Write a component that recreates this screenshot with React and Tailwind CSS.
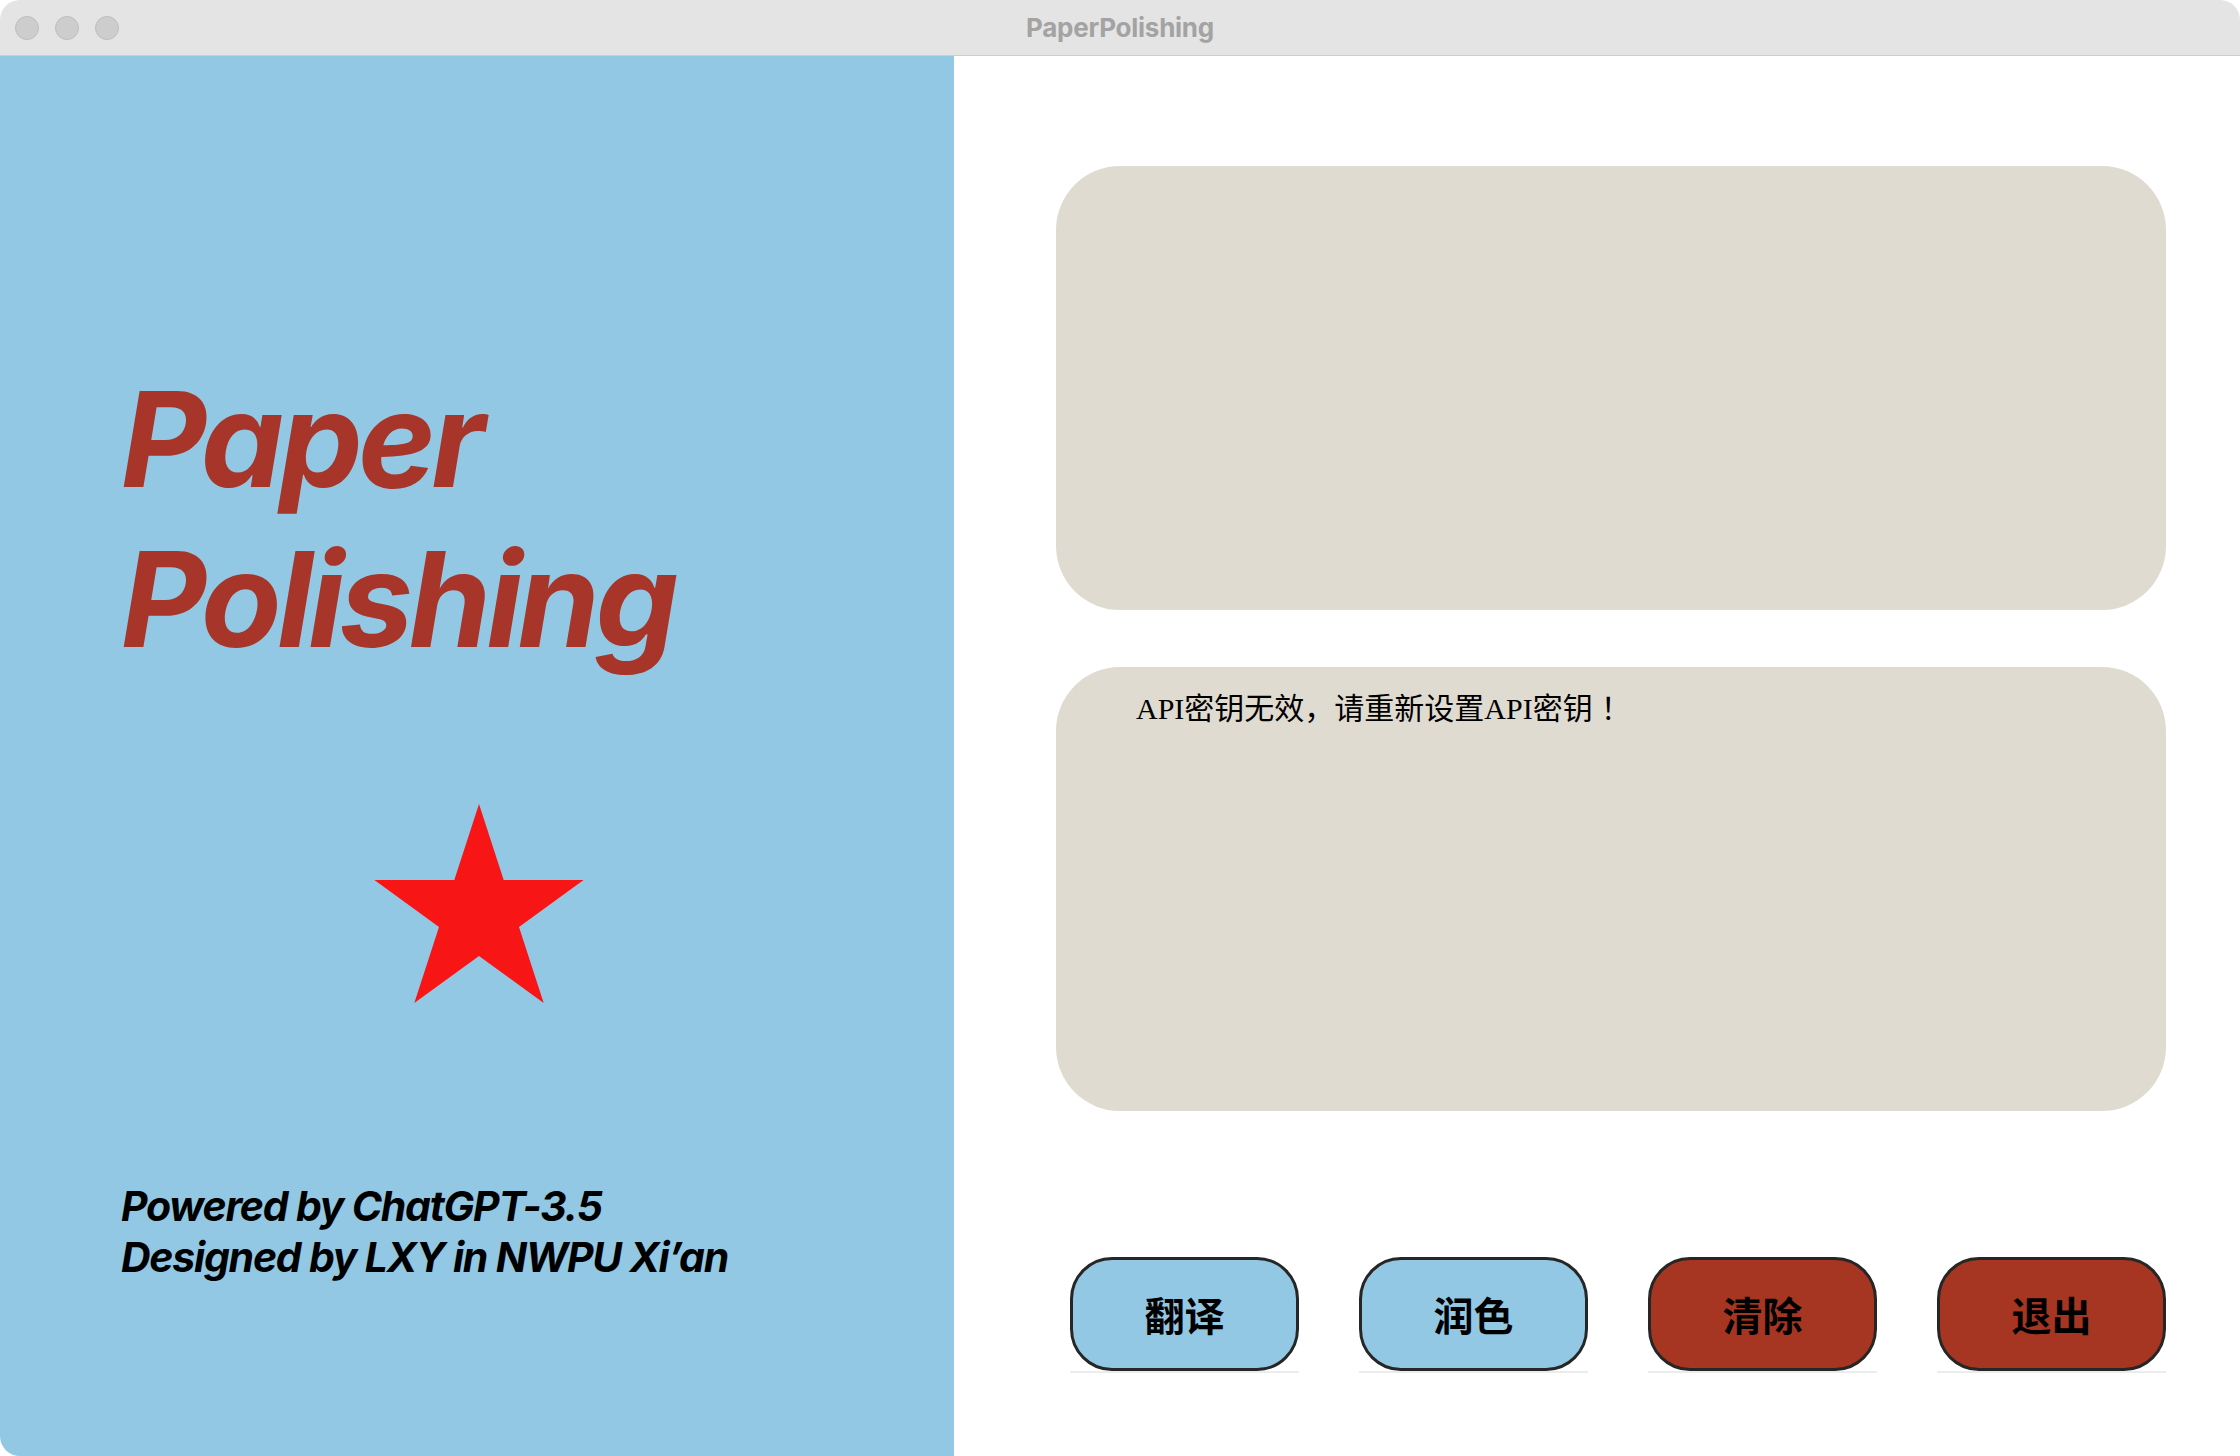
import React from 'react';

const buttons = [
  { label: '翻译', color: 'bg-[#92c8e3]' },
  { label: '润色', color: 'bg-[#92c8e3]' },
  { label: '清除', color: 'bg-[#a63522]' },
  { label: '退出', color: 'bg-[#a63522]' },
];

const Star = () => (
  <svg width="220" height="200" viewBox="0 0 220 200" className="block">
    <polygon
      fill="#f71515"
      points="110,0 134.7,76 214.6,76 150,123 174.7,199 110,152 45.3,199 70,123 5.4,76 85.3,76"
    />
  </svg>
);

const App = () => {
  return (
    <div className="w-[2240px] h-[1456px] bg-white">
      <div className="w-full h-full flex flex-col rounded-[20px] overflow-hidden">
        {/* title bar */}
        <div className="h-[56px] shrink-0 bg-[#e4e4e4] border-b border-[#cfcfcf] flex items-center relative">
          <div className="flex items-center gap-[16px] pl-[15px]">
            <div className="w-[24px] h-[24px] rounded-full bg-[#cdcdcd] border border-[#bdbdbd]" />
            <div className="w-[24px] h-[24px] rounded-full bg-[#cdcdcd] border border-[#bdbdbd]" />
            <div className="w-[24px] h-[24px] rounded-full bg-[#cdcdcd] border border-[#bdbdbd]" />
          </div>
          <div className="absolute inset-0 flex items-center justify-center pointer-events-none">
            <span className="text-[26px] font-bold text-[#a3a3a3] font-['Inter',sans-serif] tracking-[-0.01em]">PaperPolishing</span>
          </div>
        </div>

        <div className="flex-1 flex">
          {/* left panel */}
          <div className="w-[954px] shrink-0 bg-[#92c8e3] flex flex-col pl-[121px] pt-[303px] font-['Inter',sans-serif]">
            <div className="text-[132px] leading-[160px] font-bold italic text-[#a8352a] tracking-[-0.035em]">
              <div>Paper</div>
              <div>Polishing</div>
            </div>
            <div className="ml-[248px] mt-[125px]">
              <Star />
            </div>
            <div className="mt-[177px] text-[41px] leading-[51px] font-bold italic text-black tracking-[-0.03em]">
              <div>Powered by ChatGPT-3.5</div>
              <div>Designed by LXY in NWPU Xi’an</div>
            </div>
          </div>

          {/* right panel */}
          <div className="flex-1 flex flex-col pl-[102px] pr-[74px] pt-[110px]">
            <div className="h-[444px] rounded-[64px] bg-[#dfdbd0]" />
            <div className="h-[444px] mt-[57px] rounded-[64px] bg-[#dfdbd0] pl-[80px] pt-[21px]">
              <p className="text-[30px] leading-[36px] text-black font-['Liberation_Serif','Noto_Sans_CJK_SC',serif]">
                API密钥无效，请重新设置API密钥<span className="font-['Noto_Sans_CJK_SC',sans-serif] pl-[8px]">！</span>
              </p>
            </div>
            <div className="mt-[146px] ml-[14px] flex gap-[60px]">
              {buttons.map((b) => (
                <div key={b.label} className="w-[229px] border-b-2 border-[#ececec]">
                  <button
                    className={`w-full h-[114px] rounded-[42px] border-[3px] border-[#262626] ${b.color} flex items-center justify-center text-[40px] font-bold text-black font-['Noto_Sans_CJK_SC',sans-serif]`}
                  >
                    {b.label}
                  </button>
                </div>
              ))}
            </div>
          </div>
        </div>
      </div>
    </div>
  );
};

export default App;
